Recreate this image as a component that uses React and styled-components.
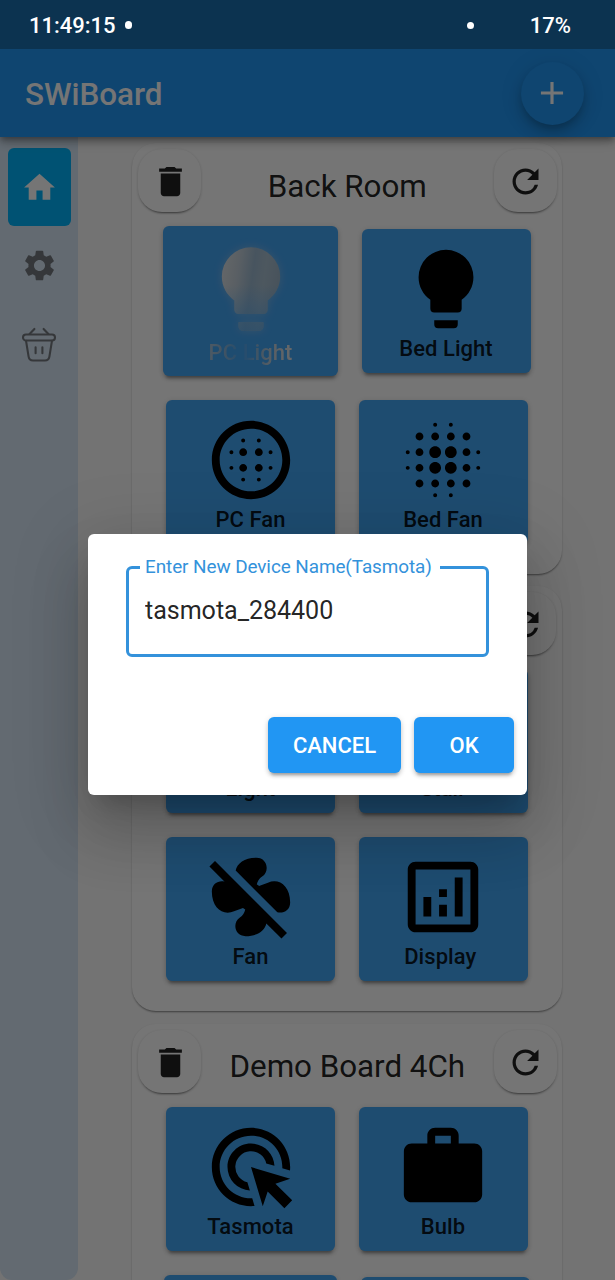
import React from "react";
import styled, { createGlobalStyle, css } from "styled-components";
import {
  MdAdd,
  MdAdsClick,
  MdBlurCircular,
  MdBlurOn,
  MdDelete,
  MdHome,
  MdModeFanOff,
  MdOutlineAnalytics,
  MdRefresh,
  MdSettings,
  MdWork,
} from "react-icons/md";

const GlobalStyle = createGlobalStyle`
  *, *::before, *::after { box-sizing: border-box; }
  body { margin: 0; font-family: Roboto, "Liberation Sans", sans-serif; overflow: hidden; }
  button { font: inherit; border: 0; padding: 0; }
  svg { display: block; flex: none; }
`;

const Screen = styled.div`
  position: relative;
  width: 615px;
  height: 1280px;
  overflow: hidden;
  display: flex;
  flex-direction: column;
  background: #fafafa;
`;

const StatusBar = styled.header`
  position: relative;
  z-index: 3;
  flex: none;
  height: 49px;
  padding: 1px 44px 0 29px;
  display: flex;
  align-items: center;
  background: #0c3350;
  color: #fff;
  font-size: 22px;
  font-weight: 500;
`;

const Dot = styled.span`
  width: ${(p) => p.$size}px;
  height: ${(p) => p.$size}px;
  border-radius: 50%;
  background: #fff;
  margin: ${(p) => p.$margin};
`;

const AppBar = styled.div`
  position: relative;
  z-index: 1;
  flex: none;
  height: 88px;
  padding: 0 31.5px 0 25px;
  display: flex;
  align-items: center;
  justify-content: space-between;
  background: #2196f3;
  color: #fff;
  box-shadow: 0 3px 6px -1px rgba(0, 0, 0, 0.3), 0 6px 8px rgba(0, 0, 0, 0.16),
    0 1px 15px rgba(0, 0, 0, 0.14);
`;

const AppTitle = styled.h1`
  margin: 0;
  padding-top: 2px;
  font-size: 31.4px;
  font-weight: 500;
  letter-spacing: -0.05px;
`;

const AddButton = styled.button`
  width: 63px;
  height: 63px;
  border-radius: 50%;
  display: grid;
  place-items: center;
  background: #2196f3;
  color: #fff;
  box-shadow: 0 5px 8px -2px rgba(0, 0, 0, 0.2), 0 9px 15px rgba(0, 0, 0, 0.12),
    0 2px 26px rgba(0, 0, 0, 0.08);
`;

const Body = styled.div`
  flex: 1;
  min-height: 0;
  display: flex;
`;

const Rail = styled.nav`
  flex: none;
  width: 78px;
  height: 1143px;
  padding: 11px 7px 0 8px;
  background: #d7e7f6;
  border-radius: 0 0 12px 12px;
`;

const RailItem = styled.div`
  height: ${(p) => (p.$active ? 78 : 79)}px;
  padding-right: 1px;
  display: grid;
  place-items: center;
  border-radius: 6px;
  color: ${(p) => (p.$active ? "#fff" : "#75797e")};
  background: ${(p) => (p.$active ? "#00b4fa" : "transparent")};
`;

const Boards = styled.main`
  flex: 1;
  min-width: 0;
  padding: 6px 53px 0 54px;
  display: flex;
  flex-direction: column;
  gap: 12.4px;
`;

const Board = styled.section`
  flex: none;
  padding: 0 0 30px;
  border-radius: 24px;
  background: #fff;
  box-shadow: 0 2px 2px -1px rgba(0, 0, 0, 0.32), 0 1px 2px rgba(0, 0, 0, 0.2);
`;

const BoardHeader = styled.div`
  height: 83px;
  padding: 6px 5.5px 0 6px;
  display: flex;
  align-items: flex-start;
  justify-content: space-between;
`;

const BoardTitle = styled.h2`
  margin: 0;
  padding-top: 18.7px;
  line-height: 37px;
  font-size: 31.4px;
  font-weight: 400;
  letter-spacing: -0.05px;
  color: rgba(0, 0, 0, 0.87);
`;

const RoundButton = styled.button`
  width: 63px;
  height: 63px;
  padding: 2px 0 0 1px;
  border-radius: 24px;
  display: grid;
  place-items: center;
  background: #fff;
  color: rgba(0, 0, 0, 0.87);
  box-shadow: 0 3px 2px -2px rgba(0, 0, 0, 0.4), 0 1px 3px rgba(0, 0, 0, 0.2);
`;

const TileRows = styled.div`
  display: flex;
  flex-direction: column;
  gap: 24px;
`;

const TileRow = styled.div`
  display: flex;
  align-items: center;
  justify-content: center;
  gap: 24px;
`;

const TileButton = styled.button`
  width: ${(p) => 169 + p.$grow}px;
  height: ${(p) => 144 + p.$grow}px;
  padding: 2px 0 0;
  border-radius: 6px;
  display: flex;
  flex-direction: column;
  align-items: center;
  justify-content: center;
  background: #42a5f5;
  color: #000;
  box-shadow: 0 5px 3px -3px rgba(0, 0, 0, 0.28), 0 3px 4px rgba(0, 0, 0, 0.16),
    0 1px 7px rgba(0, 0, 0, 0.12);

  &:last-child {
    padding-right: 1px;
  }
`;

const TileLabel = styled.span`
  line-height: 26px;
  font-size: 22px;
  font-weight: 500;
  white-space: pre;
  letter-spacing: 0.05px;
  color: rgba(0, 0, 0, 0.87);
  ${(p) =>
    p.$shimmer &&
    css`
      padding-top: 1px;
      color: transparent;
      background: linear-gradient(90deg, #a9c4da 0%, #8db6d8 18%, #5fabe8 32%, #55a8ee 46%, #93bbda 60%, #c3d0da 78%, #dfe3e6 100%);
      background-clip: text;
    `}
`;

const Scrim = styled.div`
  position: absolute;
  inset: 49px 0 0;
  z-index: 2;
  display: flex;
  align-items: center;
  justify-content: center;
  background: rgba(0, 0, 0, 0.54);
`;

const Dialog = styled.div`
  width: 439px;
  height: 261px;
  padding: 22px 13px 22px 38px;
  display: flex;
  flex-direction: column;
  justify-content: space-between;
  border-radius: 6px;
  background: #fff;
  box-shadow: 0 17px 24px -11px rgba(0, 0, 0, 0.2), 0 38px 60px 5px rgba(0, 0, 0, 0.14),
    0 14px 72px 13px rgba(0, 0, 0, 0.1);
`;

const Field = styled.fieldset`
  margin: 0 25px 0 0;
  width: 363px;
  height: 101px;
  min-width: 0;
  padding: 0 16px 0 11px;
  border: 3px solid #3492db;
  border-radius: 6px;
`;

const FieldLabel = styled.legend`
  padding: 0 8px 0 5px;
  line-height: 22px;
  font-size: 18.9px;
  color: #3492db;
  letter-spacing: -0.07px;
`;

const FieldInput = styled.input`
  display: block;
  width: 100%;
  margin: 16px 0 0;
  padding: 0 0 0 5px;
  height: 32px;
  border: 0;
  outline: 0;
  background: transparent;
  font: 400 25.1px Roboto, sans-serif;
  letter-spacing: -0.05px;
  color: rgba(0, 0, 0, 0.87);
`;

const Actions = styled.div`
  display: flex;
  justify-content: flex-end;
  gap: 13px;
`;

const ActionButton = styled.button`
  width: ${(p) => p.$width}px;
  height: 56px;
  padding-top: 1px;
  border-radius: 6px;
  background: #2196f3;
  color: #fff;
  font-size: 22px;
  font-weight: 500;
  box-shadow: 0 5px 3px -3px rgba(0, 0, 0, 0.22), 0 3px 4px rgba(0, 0, 0, 0.14),
    0 1px 6px rgba(0, 0, 0, 0.12);
`;

const GlowSvg = styled.svg`
  overflow: visible;
  filter: drop-shadow(0 0 5px rgba(190, 205, 215, 0.45));
`;

const BULB =
  "M12 2a7 7 0 0 0-7 7c0 2.38 1.19 4.47 3 5.74V17a1 1 0 0 0 1 1h6a1 1 0 0 0 1-1v-2.26c1.81-1.27 3-3.36 3-5.74a7 7 0 0 0-7-7M9 21a1 1 0 0 0 1 1h4a1 1 0 0 0 1-1v-1H9z";

const Bulb = ({ size }) => (
  <svg width={size} height={size} viewBox="0 0 24 24" fill="currentColor">
    <path d={BULB} />
  </svg>
);

const ShimmerBulb = ({ size }) => (
  <GlowSvg width={size} height={size} viewBox="0 0 24 24">
    <defs>
      <linearGradient id="shine" x1="0" y1="0.1" x2="1" y2="0.3">
        <stop offset="0" stopColor="#dbe0e4" />
        <stop offset="0.3" stopColor="#c3cfd9" />
        <stop offset="0.55" stopColor="#9cb8cf" />
        <stop offset="0.75" stopColor="#a9bfd0" />
        <stop offset="1" stopColor="#9db5c8" />
      </linearGradient>
      <linearGradient id="fade" x1="0" y1="0" x2="0" y2="1">
        <stop offset="0.45" stopColor="#42a5f5" stopOpacity="0" />
        <stop offset="1" stopColor="#42a5f5" stopOpacity="0.55" />
      </linearGradient>
    </defs>
    <path d={BULB} fill="url(#shine)" />
    <path d={BULB} fill="url(#fade)" />
  </GlowSvg>
);

const Basket = () => (
  <svg
    width="36"
    height="36"
    viewBox="0 0 36 36"
    fill="none"
    stroke="currentColor"
    strokeWidth="2.1"
    strokeLinecap="round"
    strokeLinejoin="round"
  >
    <rect x="2" y="7.5" width="32" height="6" rx="3" />
    <path d="M5 13.7 7.6 29.7Q8.2 33.5 12 33.5H24Q27.8 33.5 28.4 29.7L31 13.7" />
    <path d="M14.6 20.2V26.2M21.4 20.2V26.2" />
    <path d="M8.6 6.9 13.4 1.9M22.6 1.9 27.4 6.9" />
  </svg>
);

const boards = [
  {
    name: "Back Room",
    rows: [
      [
        { label: "PC Light", icon: ShimmerBulb, grow: 6, shimmer: true },
        { label: "Bed Light", icon: Bulb },
      ],
      [
        { label: "PC Fan", icon: MdBlurCircular },
        { label: "Bed Fan", icon: MdBlurOn },
      ],
    ],
  },
  {
    name: "Bedroom",
    rows: [
      [
        { label: "Light", icon: Bulb },
        { label: "Stair", icon: Bulb },
      ],
      [
        { label: "Fan", icon: MdModeFanOff },
        { label: "Display ", icon: MdOutlineAnalytics },
      ],
    ],
  },
  {
    name: "Demo Board 4Ch",
    rows: [
      [
        { label: "Tasmota", icon: MdAdsClick },
        { label: "Bulb", icon: MdWork },
      ],
      [
        { label: "", icon: Bulb, grow: 4 },
        { label: "", icon: Bulb },
      ],
    ],
  },
];

function Tile({ label, icon: Icon, grow = 0, shimmer }) {
  return (
    <TileButton $grow={grow}>
      <Icon size={94 + grow} />
      <TileLabel $shimmer={shimmer}>{label}</TileLabel>
    </TileButton>
  );
}

export default function App() {
  return (
    <>
      <GlobalStyle />
      <Screen>
        <StatusBar>
          11:49:15
          <Dot $size={7.5} $margin="0 auto 0 9px" />
          <Dot $size={7} $margin="0 56px 0 0" />
          17%
        </StatusBar>
        <AppBar>
          <AppTitle>SWiBoard</AppTitle>
          <AddButton aria-label="Add">
            <MdAdd size={38} />
          </AddButton>
        </AppBar>
        <Body>
          <Rail>
            <RailItem $active>
              <MdHome size={37} />
            </RailItem>
            <RailItem>
              <MdSettings size={37} />
            </RailItem>
            <RailItem>
              <Basket />
            </RailItem>
          </Rail>
          <Boards>
            {boards.map((board) => (
              <Board key={board.name}>
                <BoardHeader>
                  <RoundButton aria-label="Delete">
                    <MdDelete size={39} />
                  </RoundButton>
                  <BoardTitle>{board.name}</BoardTitle>
                  <RoundButton aria-label="Refresh">
                    <MdRefresh size={39} />
                  </RoundButton>
                </BoardHeader>
                <TileRows>
                  {board.rows.map((row, i) => (
                    <TileRow key={i}>
                      {row.map((tile, j) => (
                        <Tile key={j} {...tile} />
                      ))}
                    </TileRow>
                  ))}
                </TileRows>
              </Board>
            ))}
          </Boards>
        </Body>
        <Scrim>
          <Dialog role="dialog">
            <Field>
              <FieldLabel>Enter New Device Name(Tasmota)</FieldLabel>
              <FieldInput defaultValue="tasmota_284400" />
            </Field>
            <Actions>
              <ActionButton $width={133}>CANCEL</ActionButton>
              <ActionButton $width={100}>OK</ActionButton>
            </Actions>
          </Dialog>
        </Scrim>
      </Screen>
    </>
  );
}
